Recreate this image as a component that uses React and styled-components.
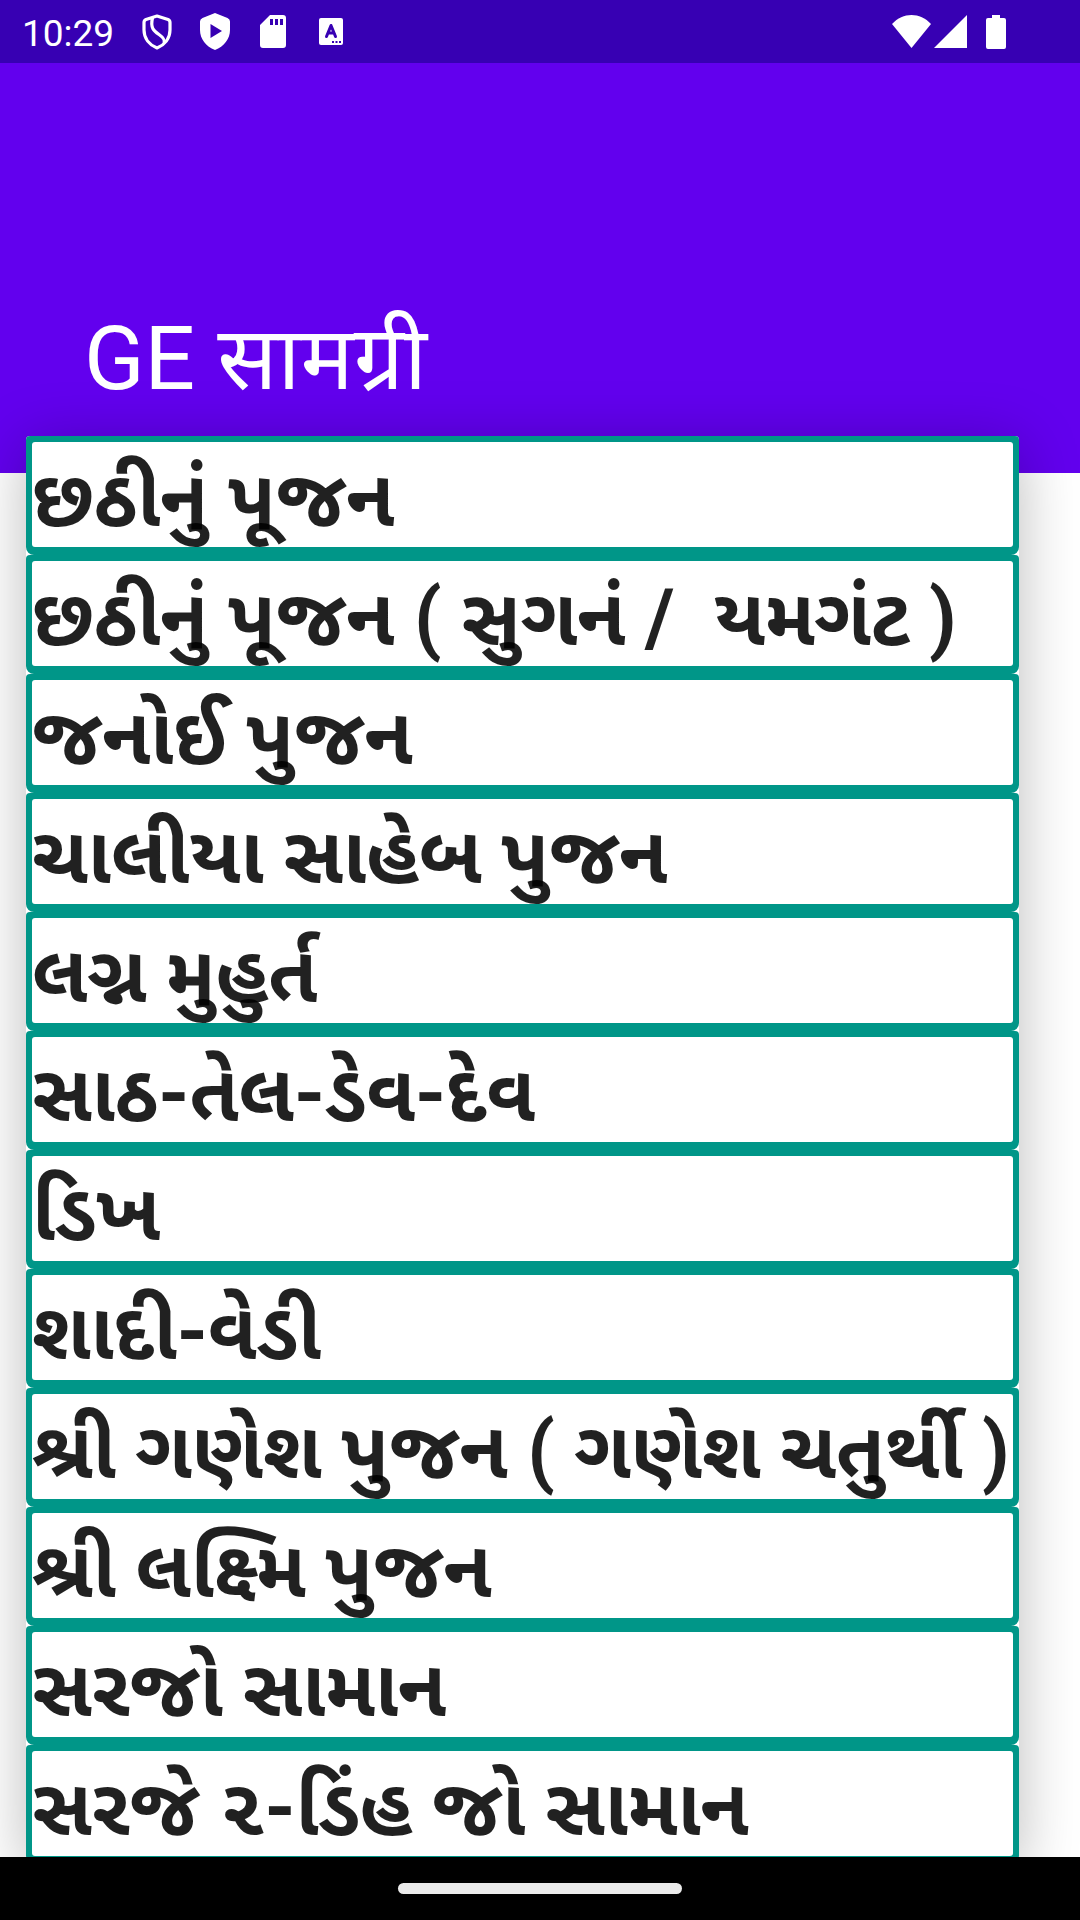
import React from 'react';
import styled, { createGlobalStyle } from 'styled-components';

const GlobalStyle = createGlobalStyle`
  *, *::before, *::after { box-sizing: border-box; }
  body {
    margin: 0;
    background: #fff;
    font-family: Roboto, "Noto Sans", "Noto Sans Gujarati", "Noto Sans Devanagari", sans-serif;
  }
`;

const Screen = styled.div`
  display: flex;
  flex-direction: column;
  height: 100vh;
  overflow: hidden;
`;

const StatusBar = styled.div`
  flex: none;
  display: flex;
  align-items: center;
  justify-content: space-between;
  height: 63px;
  padding: 0 74px 0 22px;
  background: #3700b3;
  color: #fff;
`;

const StatusGroup = styled.div`
  display: flex;
  align-items: center;
  gap: ${(p) => p.$gap}px;
`;

const Clock = styled.time`
  font-size: 37px;
  line-height: 44px;
  padding-top: 4px;
`;

const StatusIcon = styled.svg`
  display: block;
  flex: none;
  fill: #fff;
`;

const Header = styled.header`
  flex: none;
  display: flex;
  align-items: flex-end;
  height: 410px;
  padding: 0 84px 62px;
  background: #6200ee;
`;

const Title = styled.h1`
  margin: 0;
  color: #fff;
  font-size: 89px;
  font-weight: 400;
  line-height: 104px;
`;

const Content = styled.main`
  flex: 1;
  min-height: 0;
  margin-top: -37px;
  padding: 0 61px 0 26px;
`;

const Card = styled.ul`
  margin: 0;
  padding: 0;
  list-style: none;
  background: #fff;
  border-radius: 4px;
  box-shadow: 0 8px 60px rgba(0, 0, 0, 0.27);
`;

const Item = styled.li`
  padding: 6px 6px 8px;
  border-radius: 4px 4px 8px 8px;
  background: #009688;
`;

const Label = styled.div`
  height: 105px;
  border-radius: 3px;
  background: #fff;
  color: rgba(0, 0, 0, 0.87);
  font-size: 79px;
  font-weight: 700;
  font-feature-settings: ${(p) => (p.$openVowel ? '"psts" 0' : 'normal')};
  line-height: 114px;
  white-space: pre;
`;

const NavBar = styled.nav`
  position: relative;
  flex: none;
  display: flex;
  justify-content: center;
  height: 63px;
  padding-top: 26px;
  background: #000;
`;

const HomeHandle = styled.button`
  width: 284px;
  height: 11px;
  padding: 0;
  border: 0;
  border-radius: 6px;
  background: #ebebeb;
`;

const items = [
  'છઠીનું પૂજન',
  'છઠીનું પૂજન ( સુગનં /  યમગંટ )',
  'જનોઈ પુજન',
  'ચાલીયા સાહેબ પુજન',
  'લગ્ન મુહુર્ત',
  'સાઠ-તેલ-ડેવ-દેવ',
  'ડિખ',
  'શાદી-વેડી',
  'શ્રી ગણેશ પુજન ( ગણેશ ચતુર્થી )',
  'શ્રી લક્ષ્મિ પુજન',
  'સરજો સામાન',
  'સરજે ૨-ડિંહ જો સામાન',
];

function ShieldIcon() {
  return (
    <StatusIcon width="30" height="36" viewBox="0 0 30 36" aria-hidden="true">
      <path
        d="M15 2 L26 5.500 Q28 6.300 28 8.500 V16 C28 24.500 22.500 31 15 34 C7.500 31 2 24.500 2 16 V8.500 Q2 6.300 4 5.500 Z M10.500 4 C8 14 12 17 17 20.500 C22 24 23 26 22 29"
        fill="none"
        stroke="#fff"
        strokeWidth="3.2"
        strokeLinejoin="round"
      />
    </StatusIcon>
  );
}

function PlayShieldIcon() {
  return (
    <StatusIcon width="30" height="37" viewBox="0 0 30 37" aria-hidden="true">
      <path
        fillRule="evenodd"
        d="M15 0 L27.500 5 Q30 6 30 8.500 V17 C30 26 24 33.500 15 37 C6 33.500 0 26 0 17 V8.500 Q0 6 2.500 5 Z M10.500 11 V25 L22 18 Z"
      />
    </StatusIcon>
  );
}

function StorageIcon() {
  return (
    <StatusIcon width="32" height="34" viewBox="-2 0 32 34" aria-hidden="true">
      <path
        fillRule="evenodd"
        d="M10 0 H23 Q26 0 26 3 V30 Q26 33 23 33 H3 Q0 33 0 30 V10 Z M10 4 V10 H13 V4 Z M15 4 V10 H18 V4 Z M20 4 V10 H23 V4 Z"
      />
    </StatusIcon>
  );
}

function LanguageIcon() {
  return (
    <StatusIcon width="26" height="27" viewBox="-1 0 26 27" aria-hidden="true">
      <rect width="24" height="27" rx="2" />
      <path
        d="M7.500 18.500 L12 7.500 L16.500 18.500 M9 15 H15"
        fill="none"
        stroke="#3700b3"
        strokeWidth="3"
        strokeLinecap="round"
        strokeLinejoin="round"
      />
      <path d="M13 23 H15 V25 H13 Z M16.500 23 H18.500 V25 H16.500 Z M20 23 H22 V25 H20 Z" fill="#3700b3" />
    </StatusIcon>
  );
}

function WifiIcon() {
  return (
    <StatusIcon width="39" height="33" viewBox="0 0 39 33" aria-hidden="true">
      <path d="M0 9 C11 -3 28 -3 39 9 L19.500 33 Z" />
    </StatusIcon>
  );
}

function SignalIcon() {
  return (
    <StatusIcon width="33" height="33" viewBox="0 0 33 33" aria-hidden="true">
      <path d="M33 0 V33 H0 Z" />
    </StatusIcon>
  );
}

function BatteryIcon() {
  return (
    <StatusIcon width="20" height="34" viewBox="0 0 20 34" aria-hidden="true">
      <path d="M6 0 H14 V3 H18 Q20 3 20 5 V32 Q20 34 18 34 H2 Q0 34 0 32 V5 Q0 3 2 3 H6 Z" />
    </StatusIcon>
  );
}

export default function App() {
  return (
    <>
      <GlobalStyle />
      <Screen>
        <StatusBar>
          <StatusGroup $gap={28}>
            <Clock>10:29</Clock>
            <ShieldIcon />
            <PlayShieldIcon />
            <StorageIcon />
            <LanguageIcon />
          </StatusGroup>
          <StatusGroup $gap={19}>
            <StatusGroup $gap={3}>
              <WifiIcon />
              <SignalIcon />
            </StatusGroup>
            <BatteryIcon />
          </StatusGroup>
        </StatusBar>
        <Header>
          <Title>GE सामग्री</Title>
        </Header>
        <Content>
          <Card>
            {items.map((text) => (
              <Item key={text}>
                {/* The "જો" syllable keeps its vowel sign detached from the consonant. */}
                <Label $openVowel={text.includes('જો')}>{text}</Label>
              </Item>
            ))}
          </Card>
        </Content>
        <NavBar>
          <HomeHandle type="button" aria-label="Home" />
        </NavBar>
      </Screen>
    </>
  );
}
